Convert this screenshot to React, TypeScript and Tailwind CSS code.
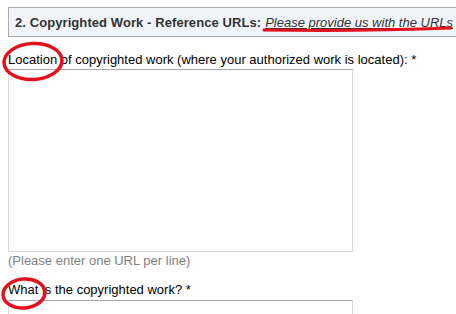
const App = () => {
  return (
    <div className="relative w-[456px] h-[314px] overflow-hidden bg-white font-['Liberation_Sans',Arial,sans-serif] text-[13px] leading-[15px] text-black">
      <div className="pl-2 pt-[7px]">
        <div className="w-[470px] h-[30px] flex items-center pl-[6px] border-t border-l border-b border-[#acacac] bg-[#f1f5fb] text-[#333] whitespace-nowrap">
          <span className="font-bold tracking-[0.08px]">2. Copyrighted Work - Reference URLs:</span>
          <span className="ml-[4px] italic underline">Please provide us with the URLs</span>
        </div>

        <div className="mt-[15px]">
          <label className="block whitespace-nowrap">
            Location of copyrighted work (where your authorized work is located): *
          </label>
          <textarea className="block mt-[2px] w-[345px] h-[183px] resize-none border border-[#d6d9df] border-t-[#a9a9a9] bg-white outline-none" />
          <div className="mt-[1px] text-[#7f7f7f]">(Please enter one URL per line)</div>
        </div>

        <div className="mt-[14px]">
          <label className="block whitespace-nowrap">What is the copyrighted work? *</label>
          <div className="mt-[3px] w-[345px] h-[40px] border border-[#d6d9df] border-t-[#a9a9a9] bg-white" />
        </div>
      </div>

      {/* red annotation marks */}
      <svg className="absolute left-0 top-0 pointer-events-none" width="456" height="314">
        <path d="M264 30 C 330 31, 400 30, 451 28" stroke="#e3101e" strokeWidth="3" fill="none" strokeLinecap="round" />
        <ellipse cx="33" cy="61.5" rx="29" ry="18" stroke="#e3101e" strokeWidth="3.5" fill="none" transform="rotate(-3 33 61.5)" />
        <ellipse cx="24" cy="293.5" rx="21" ry="14.5" stroke="#e3101e" strokeWidth="3.5" fill="none" transform="rotate(-5 24 293.5)" />
      </svg>
    </div>
  )
}

export default App
